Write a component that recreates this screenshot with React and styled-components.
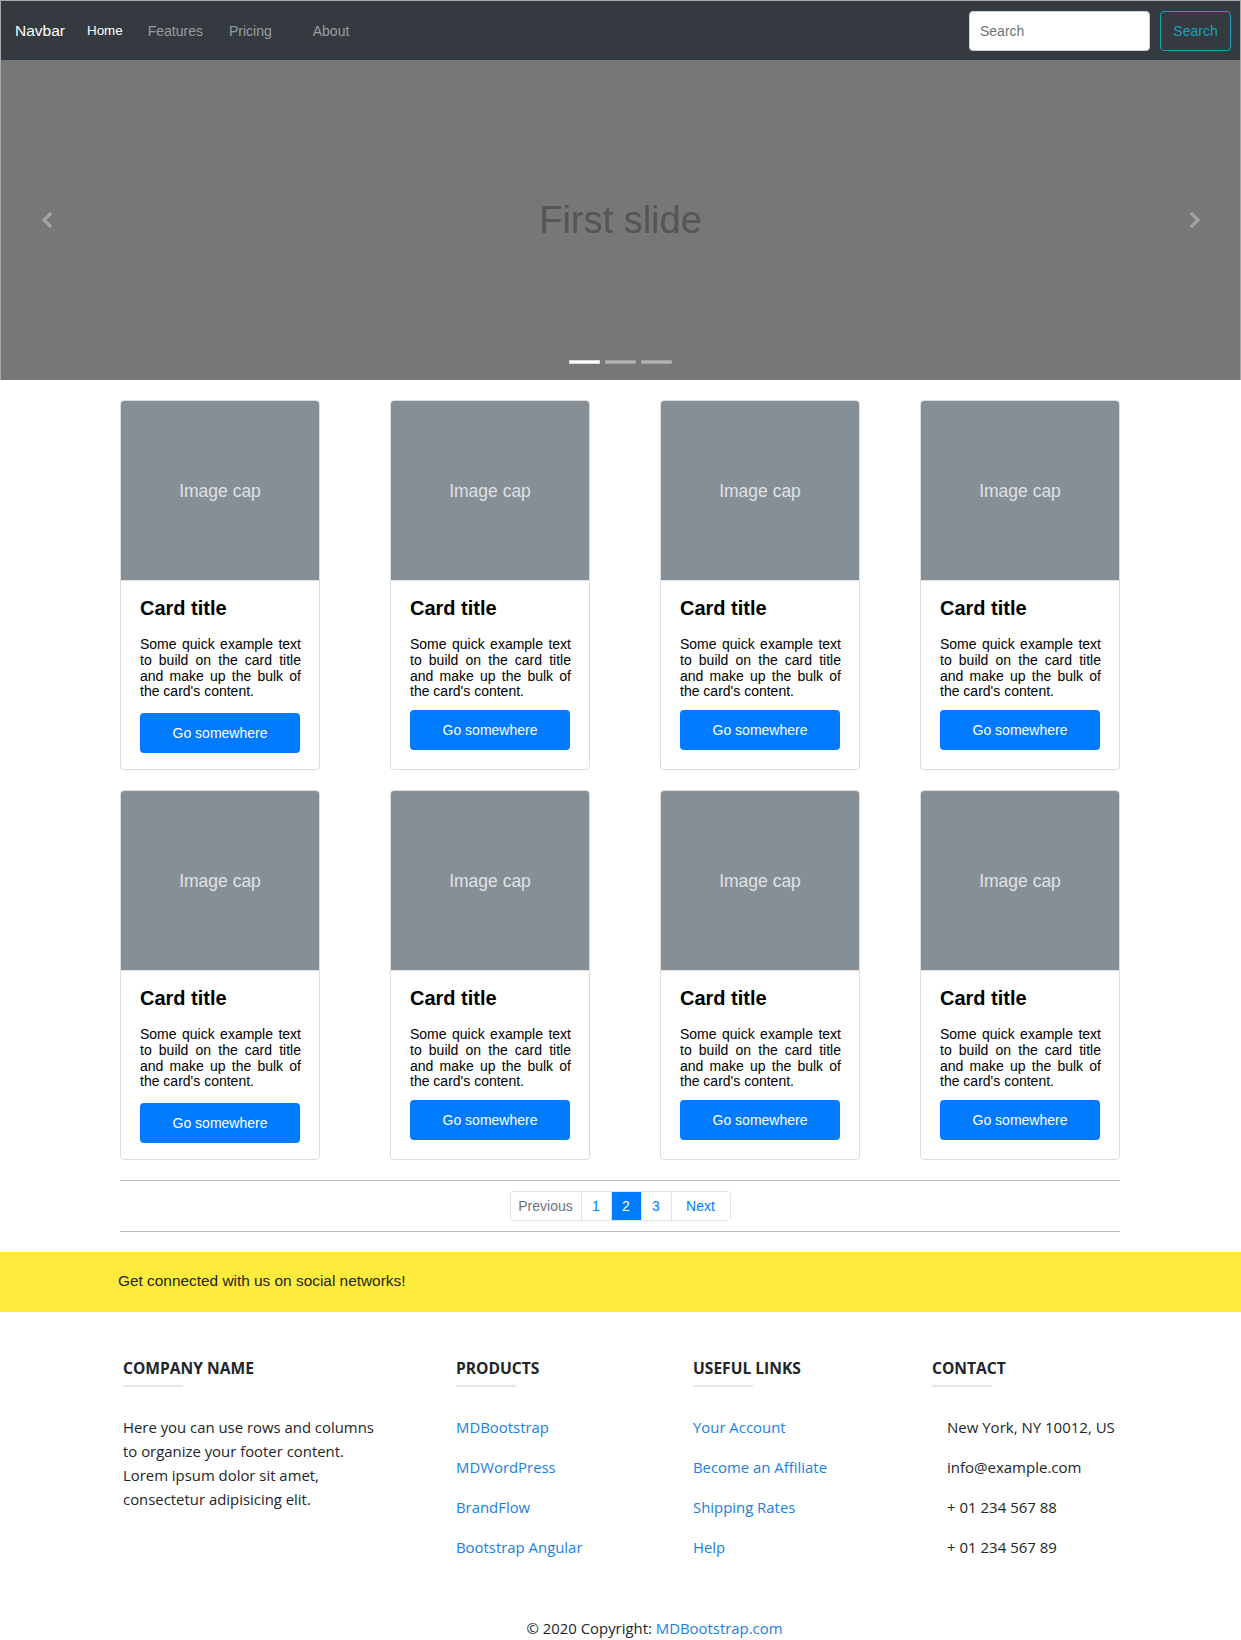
import React from "react";
import styled, { createGlobalStyle } from "styled-components";

const GlobalStyle = createGlobalStyle`
  * { box-sizing: border-box; }
  body {
    margin: 0;
    font-family: "Liberation Sans", Arial, sans-serif;
    color: #212529;
    background: #fff;
  }
`;

const Page = styled.div`
  width: 1241px;
`;

const Header = styled.header`
  border: 1px solid #a8a8a8;
  border-bottom: none;
`;

const Navbar = styled.nav`
  height: 59px;
  background: #343a40;
  display: flex;
  align-items: center;
  padding: 0 9px 0 14px;
`;

const Brand = styled.span`
  color: #fff;
  font-size: 15.5px;
  margin-right: 22px;
`;

const NavLinks = styled.div`
  display: flex;
  align-items: center;
  gap: 25px;
  flex: 1;
`;

const NavLink = styled.span`
  font-size: ${(p) => (p.$active ? "13.4px" : "14px")};
  color: ${(p) => (p.$active ? "#fff" : "rgba(255,255,255,0.5)")};
  margin-left: ${(p) => (p.$extra ? "16px" : p.$nudge ? "1px" : "0")};
`;

const SearchForm = styled.form`
  display: flex;
  gap: 10px;
  align-items: center;
`;

const SearchInput = styled.input`
  width: 181px;
  height: 40px;
  border: 1px solid #ced4da;
  border-radius: 4px;
  padding: 0 10px;
  font-family: "Liberation Sans", Arial, sans-serif;
  font-size: 14px;
  color: #495057;
  &::placeholder { color: #6c757d; }
`;

const SearchButton = styled.button`
  height: 40px;
  width: 71px;
  border: 1px solid #17a2b8;
  border-radius: 4px;
  background: transparent;
  color: #17a2b8;
  font-family: "Liberation Sans", Arial, sans-serif;
  font-size: 14px;
  padding: 0;
`;

const Carousel = styled.div`
  position: relative;
  height: 320px;
  background: #777;
  display: flex;
  align-items: center;
  justify-content: center;
`;

const SlideText = styled.div`
  font-size: 38px;
  color: #555;
`;

const Arrow = styled.div`
  position: absolute;
  top: 151px;
  ${(p) => (p.$side === "left" ? "left: 39px;" : "right: 38px;")}
  width: 14px;
  height: 18px;
  display: flex;
`;

const Indicators = styled.div`
  position: absolute;
  left: 0;
  right: 0;
  bottom: 16px;
  display: flex;
  justify-content: center;
  gap: 5px;
  padding-right: 1px;
`;

const Indicator = styled.span`
  width: 31px;
  height: 4px;
  background: ${(p) => (p.$active ? "#fff" : "#b4b4b4")};
  border: 1px solid ${(p) => (p.$active ? "#d8d8d8" : "#a0a0a0")};
`;

const Main = styled.main`
  width: 1000px;
  margin: 20px 0 0 120px;
`;

const CardGrid = styled.div`
  display: grid;
  grid-template-columns: 270px 270px 260px 200px;
  row-gap: 20px;
`;

const Card = styled.div`
  width: 200px;
  height: 370px;
  border: 1px solid #dcdcdc;
  border-radius: 4px;
  overflow: hidden;
  display: flex;
  flex-direction: column;
`;

const ImageCap = styled.div`
  height: 179px;
  background: #868e96;
  color: #dee2e6;
  font-size: 17.5px;
  display: flex;
  align-items: center;
  justify-content: center;
  padding-top: 2px;
`;

const CardBody = styled.div`
  padding: 15px 18px 0 19px;
  border-top: 1px solid #e4e4e4;
`;

const CardTitle = styled.h5`
  margin: 0 0 17px;
  font-size: 20px;
  line-height: 24px;
  font-weight: 700;
  color: #000;
`;

const CardText = styled.p`
  margin: 0;
  font-size: 14px;
  line-height: 15.8px;
  text-align: justify;
  color: #000;
`;

const CardButton = styled.button`
  display: block;
  width: 160px;
  height: 40px;
  margin-top: ${(p) => (p.$low ? "13px" : "10px")};
  border: none;
  border-radius: 4px;
  background: #007bff;
  color: #fff;
  font-family: "Liberation Sans", Arial, sans-serif;
  font-size: 14px;
  padding: 0;
`;

const Divider = styled.div`
  height: 1px;
  background: #bdbdbd;
`;

const PagerRow = styled.div`
  margin: 20px 0 0;
  display: flex;
  flex-direction: column;
  gap: 10px;
`;

const Pagination = styled.div`
  display: flex;
  justify-content: center;
`;

const PageList = styled.div`
  display: flex;
  border: 1px solid #dee2e6;
  border-radius: 4px;
  overflow: hidden;
  height: 30px;
`;

const PageItem = styled.span`
  width: ${(p) => p.$w}px;
  display: flex;
  align-items: center;
  justify-content: center;
  font-size: 14px;
  border-left: ${(p) => (p.$first ? "none" : "1px solid #dee2e6")};
  background: ${(p) => (p.$active ? "#007bff" : "#fff")};
  color: ${(p) => (p.$active ? "#fff" : p.$disabled ? "#6c757d" : "#007bff")};
`;

const SocialBand = styled.div`
  margin-top: 20px;
  height: 60px;
  background: #ffeb3b;
  display: flex;
  align-items: center;
  padding-left: 118px;
  padding-bottom: 2px;
  font-size: 15.4px;
  color: #212529;
`;

const Footer = styled.footer`
  font-family: "Open Sans", "Noto Sans", sans-serif;
  color: #212529;
  padding-top: 46px;
`;

const FooterColumns = styled.div`
  display: grid;
  grid-template-columns: 333px 237px 239px 240px;
  padding-left: 123px;
`;

const FooterCol = styled.div``;

const FooterHeading = styled.h6`
  margin: 0;
  font-size: 15.6px;
  line-height: 20px;
  font-weight: 700;
  text-transform: uppercase;
  color: #212529;
`;

const HeadingRule = styled.div`
  width: 60px;
  height: 2px;
  background: #e6e6e6;
  margin: 7px 0 28px;
`;

const FooterText = styled.p`
  margin: 0;
  font-size: 14.9px;
  line-height: 24px;
  width: 260px;
`;

const FooterLink = styled.a`
  display: block;
  font-size: 14.9px;
  line-height: 24px;
  margin-bottom: 16px;
  color: #1a7fe0;
  text-decoration: none;
`;

const ContactItem = styled.p`
  margin: 0 0 16px 15px;
  font-size: 15px;
  line-height: 24px;
  white-space: nowrap;
`;

const Copyright = styled.div`
  margin-top: 41px;
  padding-left: 68px;
  text-align: center;
  font-size: 14.9px;
  line-height: 24px;
  padding-bottom: 12px;
`;

const CopyLink = styled.a`
  color: #1a7fe0;
  text-decoration: none;
`;

const Chevron = ({ dir }) => (
  <svg width="14" height="18" viewBox="0 0 14 18">
    <polyline
      points={dir === "left" ? "10,3 4,9 10,15" : "4,3 10,9 4,15"}
      fill="none"
      stroke="#a3a3a3"
      strokeWidth="3.2"
      strokeLinecap="square"
    />
  </svg>
);

const cardText =
  "Some quick example text to build on the card title and make up the bulk of the card's content.";

const CardItem = ({ low }) => (
  <Card>
    <ImageCap>Image cap</ImageCap>
    <CardBody>
      <CardTitle>Card title</CardTitle>
      <CardText>{cardText}</CardText>
      <CardButton $low={low}>Go somewhere</CardButton>
    </CardBody>
  </Card>
);

export default function App() {
  const cols = [0, 1, 2, 3];
  return (
    <Page>
      <GlobalStyle />
      <Header>
        <Navbar>
          <Brand>Navbar</Brand>
          <NavLinks>
            <NavLink $active>Home</NavLink>
            <NavLink>Features</NavLink>
            <NavLink $nudge>Pricing</NavLink>
            <NavLink $extra>About</NavLink>
          </NavLinks>
          <SearchForm onSubmit={(e) => e.preventDefault()}>
            <SearchInput placeholder="Search" />
            <SearchButton type="button">Search</SearchButton>
          </SearchForm>
        </Navbar>
        <Carousel>
          <SlideText>First slide</SlideText>
          <Arrow $side="left">
            <Chevron dir="left" />
          </Arrow>
          <Arrow $side="right">
            <Chevron dir="right" />
          </Arrow>
          <Indicators>
            <Indicator $active />
            <Indicator />
            <Indicator />
          </Indicators>
        </Carousel>
      </Header>

      <Main>
        <CardGrid>
          {[0, 1].map((r) =>
            cols.map((c) => <CardItem key={`${r}-${c}`} low={c === 0} />)
          )}
        </CardGrid>
        <PagerRow>
          <Divider />
          <Pagination>
            <PageList>
              <PageItem $w={70} $first $disabled>Previous</PageItem>
              <PageItem $w={30}>1</PageItem>
              <PageItem $w={30} $active>2</PageItem>
              <PageItem $w={30}>3</PageItem>
              <PageItem $w={59}>Next</PageItem>
            </PageList>
          </Pagination>
          <Divider />
        </PagerRow>
      </Main>

      <SocialBand>Get connected with us on social networks!</SocialBand>

      <Footer>
        <FooterColumns>
          <FooterCol>
            <FooterHeading>Company name</FooterHeading>
            <HeadingRule />
            <FooterText>
              Here you can use rows and columns to organize your footer content.
              Lorem ipsum dolor sit amet, consectetur adipisicing elit.
            </FooterText>
          </FooterCol>
          <FooterCol>
            <FooterHeading>Products</FooterHeading>
            <HeadingRule />
            <FooterLink href="#">MDBootstrap</FooterLink>
            <FooterLink href="#">MDWordPress</FooterLink>
            <FooterLink href="#">BrandFlow</FooterLink>
            <FooterLink href="#">Bootstrap Angular</FooterLink>
          </FooterCol>
          <FooterCol>
            <FooterHeading>Useful links</FooterHeading>
            <HeadingRule />
            <FooterLink href="#">Your Account</FooterLink>
            <FooterLink href="#">Become an Affiliate</FooterLink>
            <FooterLink href="#">Shipping Rates</FooterLink>
            <FooterLink href="#">Help</FooterLink>
          </FooterCol>
          <FooterCol>
            <FooterHeading>Contact</FooterHeading>
            <HeadingRule />
            <ContactItem>New York, NY 10012, US</ContactItem>
            <ContactItem>info@example.com</ContactItem>
            <ContactItem>+ 01 234 567 88</ContactItem>
            <ContactItem>+ 01 234 567 89</ContactItem>
          </FooterCol>
        </FooterColumns>
        <Copyright>
          © 2020 Copyright: <CopyLink href="#">MDBootstrap.com</CopyLink>
        </Copyright>
      </Footer>
    </Page>
  );
}
